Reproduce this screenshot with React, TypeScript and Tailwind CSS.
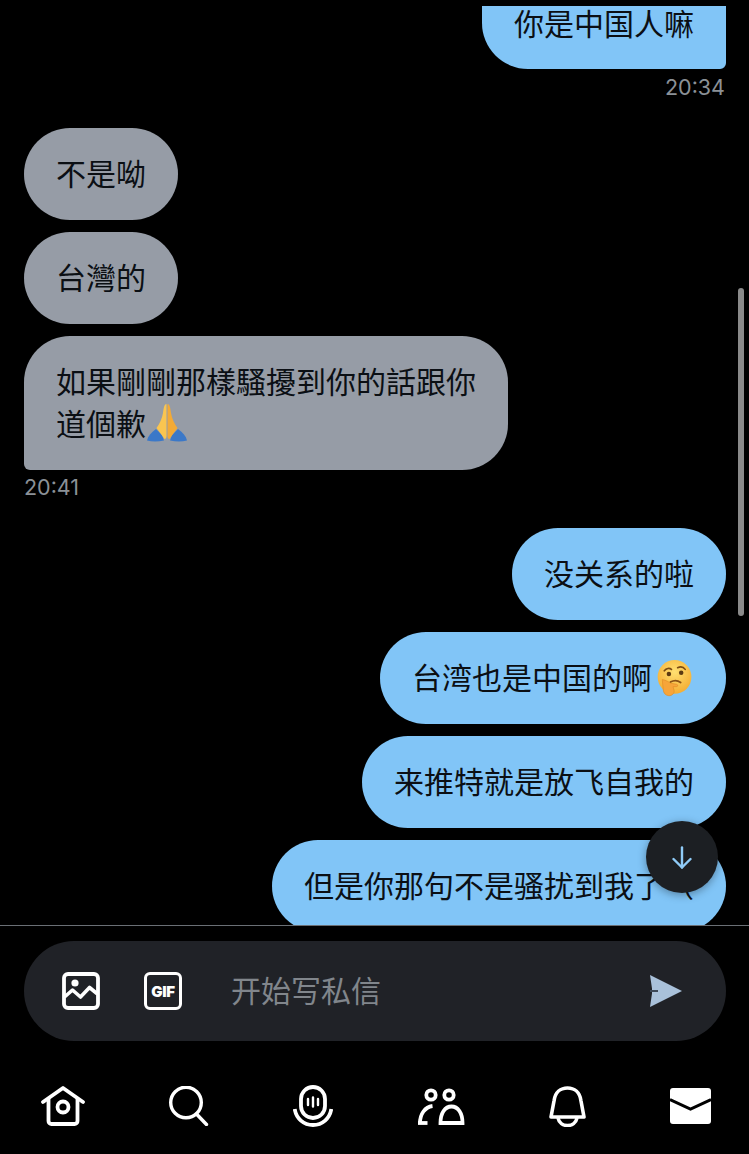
const cjk = "font-['Noto_Sans_CJK_SC','Noto_Sans_CJK_TC',sans-serif]";

const ThinkingFace = () => (
  <svg viewBox="-4 0 41 36" className="inline-block w-[42px] h-[37px] align-[-8px]">
    <defs>
      <radialGradient id="face" cx="50%" cy="35%" r="70%">
        <stop offset="0%" stopColor="#ffe071" />
        <stop offset="100%" stopColor="#f4a92e" />
      </radialGradient>
    </defs>
    <circle cx="18" cy="16.5" r="16.5" fill="url(#face)" />
    <path d="M8 10.500c2-2.600 5-3 7-1.400" fill="none" stroke="#7a4a12" strokeWidth="1.600" strokeLinecap="round" />
    <path d="M21 7.500c3-1.400 5.800-.6 7.400 1.600" fill="none" stroke="#7a4a12" strokeWidth="1.600" strokeLinecap="round" />
    <circle cx="12.500" cy="13.500" r="2.200" fill="#5b3a12" />
    <circle cx="24.500" cy="12.500" r="2.200" fill="#5b3a12" />
    <path d="M14 21.500c3-1.800 7-1.800 10 .4" fill="none" stroke="#8a5216" strokeWidth="1.700" strokeLinecap="round" />
    <path d="M6 19c3 .6 6 1.800 8 3.600l6 1c1.600.4 1.400 2.400-.2 2.400h-3.300l1 3.500c.6 3-2 5.500-5 5.300-3.500-.2-5.500-3-5.500-5.800z" fill="#f7a53a" stroke="#e08a22" strokeWidth=".6" />
  </svg>
);

const PrayingHands = () => (
  <svg viewBox="0 0 40 40" className="inline-block w-[42px] h-[40px] align-[-8px]">
    <path d="M0 37.500c1-4.500 4-8 9-11.500l6 6 2 5.500c-6 1.200-12 1.200-17 0z" fill="#3b78c8" />
    <path d="M40 37.500c-1-4.500-4-8-9-11.500l-6 6-2 5.500c6 1.200 12 1.200 17 0z" fill="#3b78c8" />
    <path d="M19.500 1c-2 0-2.700 3-3.500 9-.8 5.500-3.500 11-6.500 15l4.500 6 3.500 5c1.200 0 2-1 2-3z" fill="#fac550" />
    <path d="M20.500 1c2 0 2.700 3 3.500 9 .8 5.500 3.500 11 6.500 15l-4.500 6-3.500 5c-1.200 0-2-1-2-3z" fill="#f3aa36" />
  </svg>
);

const ImageIcon = () => (
  <svg viewBox="0 0 38 38" className="w-[38px] h-[38px]" fill="none" stroke="#fff" strokeWidth="3.800">
    <rect x="2" y="2" width="34" height="34" rx="4" />
    <circle cx="13" cy="11" r="3.600" fill="#fff" stroke="none" />
    <path d="M2.500 25l8-7 8 7 9-9.500 8 6.500" strokeLinejoin="round" strokeWidth="3.600" />
  </svg>
);

const GifIcon = () => (
  <div className="w-[38px] h-[38px] rounded-[6px] border-[3.5px] border-white flex items-center justify-center">
    <span className="font-['Inter',sans-serif] font-black text-white text-[15px] leading-none tracking-[-0.3px]">GIF</span>
  </div>
);

const SendIcon = () => (
  <svg viewBox="0 0 33 32" className="w-[33px] h-[32px]">
    <path d="M1 0l32 16L1 32l2-13.500v-5z" fill="#a9c1da" />
    <rect x="1" y="15" width="8" height="2" fill="#3c4857" />
  </svg>
);

const ArrowDown = () => (
  <svg viewBox="0 0 20 23" className="w-[20px] h-[23px]" fill="none" stroke="#8fcbf7" strokeWidth="2.400" strokeLinecap="round" strokeLinejoin="round">
    <path d="M10 1.500v20" />
    <path d="M1.500 13L10 21.500 18.500 13" />
  </svg>
);

const HomeIcon = () => (
  <svg viewBox="0 0 44 40" className="w-[44px] h-[40px]" fill="none" stroke="#fff" strokeWidth="3.800" strokeLinejoin="round" strokeLinecap="round">
    <path d="M2 16L22 2l20 14" />
    <path d="M7.500 13v22a3 3 0 0 0 3 3h23a3 3 0 0 0 3-3V13" />
    <circle cx="22" cy="21" r="5.500" />
  </svg>
);

const SearchIcon = () => (
  <svg viewBox="0 0 40 40" className="w-[40px] h-[40px]" fill="none" stroke="#fff" strokeWidth="3.400" strokeLinecap="round">
    <circle cx="17" cy="16.500" r="15.300" />
    <path d="M27.500 28l10 10.500" />
  </svg>
);

const SpacesIcon = () => (
  <svg viewBox="0 0 40 42" className="w-[40px] h-[42px]" fill="none" stroke="#fff" strokeWidth="3.800" strokeLinecap="round">
    <rect x="8" y="2" width="24" height="31" rx="12" />
    <path d="M15 14v6M20 12.500v9M25 14v6" strokeWidth="2.400" />
    <path d="M1.700 24c1.500 9.500 9 16 18.300 16s16.800-6.500 18.300-16" strokeLinecap="butt" />
  </svg>
);

const PeopleIcon = () => (
  <svg viewBox="0 0 48 37" className="w-[48px] h-[37px]" fill="none" stroke="#fff" strokeWidth="3.800">
    <circle cx="14" cy="7" r="4.700" />
    <circle cx="32" cy="7" r="4.700" />
    <path d="M3 35C3 26 8 19 15.500 18" />
    <path d="M1 35h9.500" />
    <path d="M23.500 35c0-10 4.500-16.500 11-16.500S45.500 25 45.500 35z" />
  </svg>
);

const BellIcon = () => (
  <svg viewBox="0 0 37 41" className="w-[37px] h-[41px]" fill="none" stroke="#fff" strokeWidth="3.600" strokeLinejoin="round">
    <path d="M2 31L5 15C6 6 12 2 18.500 2S31 6 32 15l3 16z" />
    <path d="M9 32c1 5 5 7.500 9.500 7.500S27 37 28 32" />
  </svg>
);

const MailIcon = () => (
  <svg viewBox="0 0 41 36" className="w-[41px] h-[36px]">
    <rect width="41" height="36" rx="3" fill="#fff" />
    <path d="M0 11.500L20.500 21 41 11.500" fill="none" stroke="#000" strokeWidth="3" />
  </svg>
);

const Bubble = ({ side, corner, children }: { side: "left" | "right"; corner?: string; children: React.ReactNode }) => (
  <div
    className={`px-[32px] pt-[23px] pb-[27px] text-[30px] leading-[42px] whitespace-nowrap text-[#0b0f14] ${
      side === "right" ? "self-end bg-[#81c5f7]" : "self-start bg-[#969ca6]"
    } ${corner ?? "rounded-[46px]"}`}
  >
    {children}
  </div>
);

export default function App() {
  return (
    <div className={`h-[1154px] w-[749px] overflow-hidden bg-black flex flex-col relative ${cjk}`}>
      <div className="h-[926px] shrink-0 border-b border-[#6a6f75] overflow-hidden relative">
        <div className="flex flex-col pr-[23px] pl-[24px] pt-[6px]">
          <div className="self-end h-[63px] w-[244px] bg-[#81c5f7] rounded-bl-[46px] rounded-br-[6px] flex justify-center">
            <span className="text-[30px] leading-[33px] text-[#0b0f14]">你是中国人嘛</span>
          </div>
          <p className="self-end pr-[1px] mt-[4px] text-[21.5px] leading-[28px] text-[#8b9197] font-['Inter',sans-serif]">20:34</p>

          <div className="flex flex-col gap-[12px] mt-[27px]">
            <Bubble side="left">不是呦</Bubble>
            <Bubble side="left">台灣的</Bubble>
            <Bubble side="left" corner="rounded-t-[46px] rounded-br-[46px] rounded-bl-[6px]">
              <div className="w-[420px]">
                如果剛剛那樣騷擾到你的話跟你
                <br />
                道個歉
                <PrayingHands />
              </div>
            </Bubble>
          </div>
          <p className="self-start mt-[3px] text-[21.5px] leading-[28px] text-[#8b9197] font-['Inter',sans-serif]">20:41</p>

          <div className="flex flex-col gap-[12px] mt-[27px]">
            <Bubble side="right">没关系的啦</Bubble>
            <Bubble side="right">
              台湾也是中国的啊
              <ThinkingFace />
            </Bubble>
            <Bubble side="right">来推特就是放飞自我的</Bubble>
            <Bubble side="right">但是你那句不是骚扰到我了（</Bubble>
          </div>
        </div>

        <div className="absolute right-[5px] top-[288px] h-[328px] w-[6px] rounded-full bg-[#8a8a8a]" />
        <div className="absolute left-[646px] top-[821px] h-[72px] w-[72px] rounded-full bg-[#1c1f23] flex items-center justify-center shadow-[0_2px_8px_rgba(0,0,0,0.35)]">
          <ArrowDown />
        </div>
      </div>

      <div className="ml-[24px] mr-[23px] mt-[15px] h-[100px] rounded-[50px] bg-[#202227] flex items-center pl-[38px] pr-[44px]">
        <ImageIcon />
        <div className="ml-[44px]">
          <GifIcon />
        </div>
        <span className="ml-[49px] pb-[4px] text-[30px] text-[#81868c]">开始写私信</span>
        <div className="ml-auto">
          <SendIcon />
        </div>
      </div>

      <div className="flex items-center justify-between pl-[41px] pr-[38px] mt-[44px]">
        <HomeIcon />
        <SearchIcon />
        <SpacesIcon />
        <PeopleIcon />
        <BellIcon />
        <MailIcon />
      </div>
    </div>
  );
}
